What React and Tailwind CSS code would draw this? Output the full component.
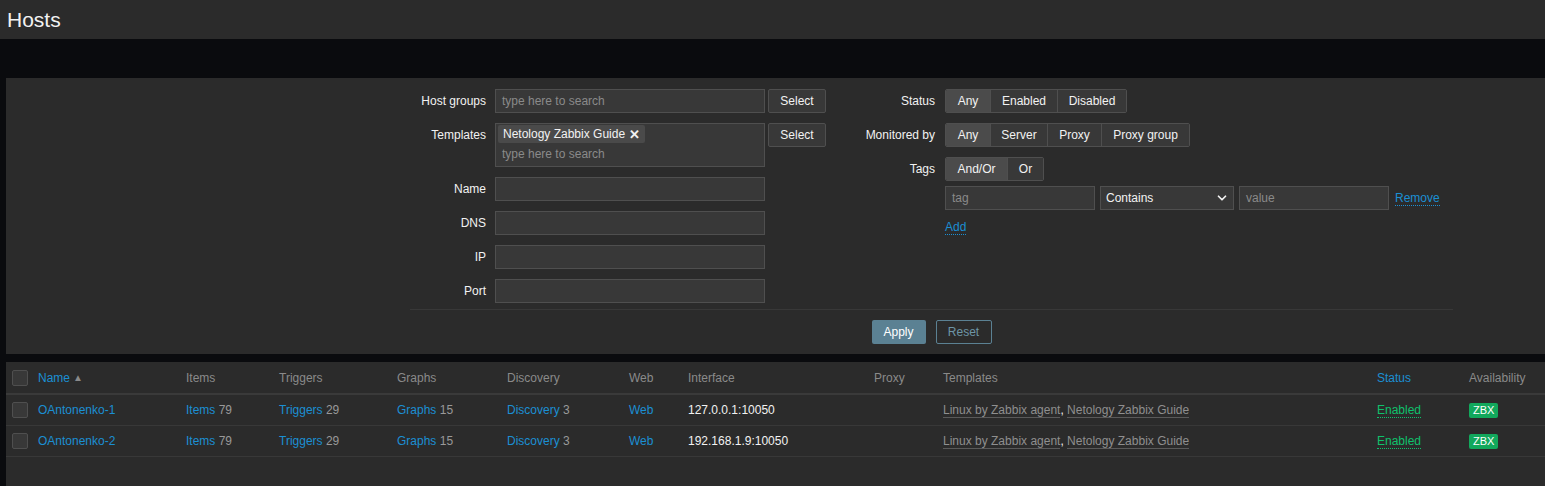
import { ChevronDown } from 'lucide-react';

const font = { fontFamily: '"Liberation Sans", Arial, sans-serif' };

function Input({ placeholder, className = 'w-[270px]' }) {
  return (
    <div className={`h-6 bg-[#383838] border border-[#4f4f4f] px-[6px] flex items-center text-[#8a8a8a] ${className}`}>
      {placeholder}
    </div>
  );
}

function SelectBtn() {
  return (
    <div className="h-6 w-[58px] bg-[#383838] border border-[#4f4f4f] rounded-[2px] flex items-center justify-center text-[#f2f2f2]">
      Select
    </div>
  );
}

function Segmented({ items, widths }) {
  return (
    <div className="flex self-start h-6 border border-[#4f4f4f] rounded-[2px] overflow-hidden">
      {items.map((it, i) => (
        <div
          key={it}
          className={`flex items-center justify-center text-[#f2f2f2] ${i === 0 ? 'bg-[#4b4b4b]' : 'bg-[#383838] border-l border-[#4f4f4f]'} ${widths[i]}`}
        >
          {it}
        </div>
      ))}
    </div>
  );
}

function Label({ children, className }) {
  return <div className={`h-6 flex items-center justify-end text-[#f2f2f2] ${className}`}>{children}</div>;
}

function Checkbox() {
  return <div className="w-4 h-4 bg-[#383838] border border-[#4f4f4f] rounded-[2px]" />;
}

const cols = 'grid grid-cols-[32px_148px_93px_118px_110px_122px_59px_186px_69px_434px_92px_1fr]';

function HostRow({ name, ip }) {
  return (
    <div className={`${cols} h-[31px] items-center border-b border-[#383838]`}>
      <div className="pl-[6px]"><Checkbox /></div>
      <div className="text-[#1b8fd3]">{name}</div>
      <div><span className="text-[#1b8fd3]">Items</span> <span className="text-[#999]">79</span></div>
      <div><span className="text-[#1b8fd3]">Triggers</span> <span className="text-[#999]">29</span></div>
      <div><span className="text-[#1b8fd3]">Graphs</span> <span className="text-[#999]">15</span></div>
      <div><span className="text-[#1b8fd3]">Discovery</span> <span className="text-[#999]">3</span></div>
      <div className="text-[#1b8fd3]">Web</div>
      <div className="text-[#f2f2f2]">{ip}</div>
      <div />
      <div className="text-[#8f8f8f]">
        <span className="border-b border-[#5a5a5a]">Linux by Zabbix agent</span>
        <span className="text-[#f2f2f2]">, </span>
        <span className="border-b border-[#5a5a5a]">Netology Zabbix Guide</span>
      </div>
      <div>
        <span className="text-[#0fc16c] border-b border-dotted border-[#0fc16c]">Enabled</span>
      </div>
      <div>
        <span className="inline-flex items-center justify-center h-[15px] px-[4px] bg-[#12a85c] text-white text-[11px] rounded-[2px]">ZBX</span>
      </div>
    </div>
  );
}

export default function App() {
  return (
    <div className="min-h-screen bg-[#0a0b0e] text-[12px]" style={font}>
      <div className="h-[39px] bg-[#2b2b2b] flex items-center px-[7px]">
        <h1 className="text-[21px] text-[#f2f2f2] leading-none">Hosts</h1>
      </div>

      <div className="h-[39px]" />

      <div className="ml-[6px] bg-[#2b2b2b] pt-[11px] pb-[10px]">
        <div className="ml-[404px] w-[1043px]">
          <div className="flex">
            <div className="flex flex-col gap-[10px]">
              <div className="flex items-start">
                <Label className="w-[76px]">Host groups</Label>
                <div className="ml-[9px]"><Input placeholder="type here to search" /></div>
                <div className="ml-[3px]"><SelectBtn /></div>
              </div>
              <div className="flex items-start">
                <Label className="w-[76px]">Templates</Label>
                <div className="ml-[9px] w-[270px] h-[44px] bg-[#383838] border border-[#4f4f4f] px-[2px] pt-[1px]">
                  <span className="inline-flex items-center h-[18px] px-[5px] bg-[#4a4a4a] rounded-[2px] text-[#f2f2f2]">
                    Netology Zabbix Guide
                    <span className="ml-[4px] font-bold text-[13px] leading-none">✕</span>
                  </span>
                  <div className="px-[4px] pt-[2px] text-[#8a8a8a]">type here to search</div>
                </div>
                <div className="ml-[3px]"><SelectBtn /></div>
              </div>
              {['Name', 'DNS', 'IP', 'Port'].map((l) => (
                <div key={l} className="flex items-start">
                  <Label className="w-[76px]">{l}</Label>
                  <div className="ml-[9px]"><Input /></div>
                </div>
              ))}
            </div>

            <div className="flex flex-col">
              <div className="flex items-start">
                <Label className="w-[109px]">Status</Label>
                <div className="ml-[10px]">
                  <Segmented items={['Any', 'Enabled', 'Disabled']} widths={['w-[44px]', 'w-[67px]', 'w-[69px]']} />
                </div>
              </div>
              <div className="flex items-start mt-[10px]">
                <Label className="w-[109px]">Monitored by</Label>
                <div className="ml-[10px]">
                  <Segmented items={['Any', 'Server', 'Proxy', 'Proxy group']} widths={['w-[44px]', 'w-[57px]', 'w-[54px]', 'w-[88px]']} />
                </div>
              </div>
              <div className="flex items-start mt-[10px]">
                <Label className="w-[109px]">Tags</Label>
                <div className="ml-[10px] flex flex-col items-start">
                  <Segmented items={['And/Or', 'Or']} widths={['w-[61px]', 'w-[36px]']} />
                  <div className="flex items-center mt-[5px]">
                    <Input placeholder="tag" className="w-[150px]" />
                    <div className="ml-[5px] w-[134px] h-6 bg-[#383838] border border-[#4f4f4f] pl-[5px] pr-[4px] flex items-center justify-between text-[#f2f2f2]">
                      Contains
                      <ChevronDown size={14} strokeWidth={3} className="text-[#f2f2f2]" />
                    </div>
                    <div className="ml-[5px]"><Input placeholder="value" className="w-[150px]" /></div>
                    <span className="ml-[6px] text-[#1b8fd3] border-b border-dotted border-[#1b8fd3] leading-[14px]">Remove</span>
                  </div>
                  <div className="mt-[8px]">
                    <span className="text-[#1b8fd3] border-b border-dotted border-[#1b8fd3] leading-[14px]">Add</span>
                  </div>
                </div>
              </div>
            </div>
          </div>

          <div className="mt-[6px] border-t border-[#383838] pt-[10px] flex justify-center gap-[10px]">
            <div className="h-6 w-[54px] bg-[#5b8193] rounded-[2px] flex items-center justify-center text-white">Apply</div>
            <div className="h-6 w-[56px] border border-[#5b8193] rounded-[2px] flex items-center justify-center text-[#6d95a6]">Reset</div>
          </div>
        </div>
      </div>

      <div className="h-[8px]" />

      <div className="ml-[6px] bg-[#2b2b2b] min-h-[125px]">
        <div className={`${cols} h-[33px] items-center border-b-2 border-[#3a3a3a] text-[#8a8a8a]`}>
          <div className="pl-[6px]"><Checkbox /></div>
          <div className="flex items-center">
            <span className="text-[#1b8fd3]">Name</span>
            <span className="ml-[3px] text-[#8a8a8a] text-[10px]">▲</span>
          </div>
          <div>Items</div>
          <div>Triggers</div>
          <div>Graphs</div>
          <div>Discovery</div>
          <div>Web</div>
          <div>Interface</div>
          <div>Proxy</div>
          <div>Templates</div>
          <div className="text-[#1b8fd3]">Status</div>
          <div>Availability</div>
        </div>
        <HostRow name="OAntonenko-1" ip="127.0.0.1:10050" />
        <HostRow name="OAntonenko-2" ip="192.168.1.9:10050" />
      </div>
    </div>
  );
}
